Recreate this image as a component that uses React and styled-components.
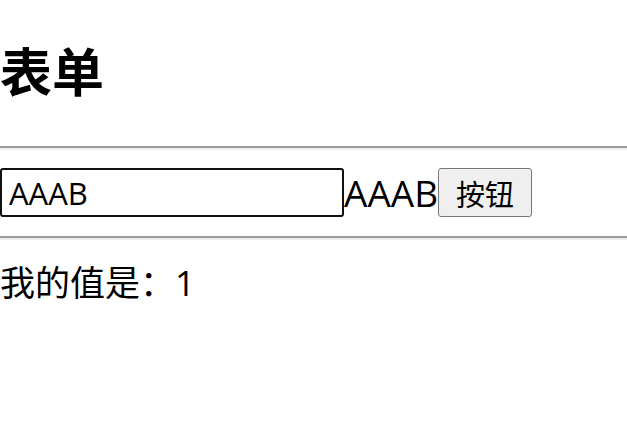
import React, { useState } from "react";
import styled, { createGlobalStyle } from "styled-components";

const GlobalStyle = createGlobalStyle`
  body {
    margin: 0;
    background: #fff;
    color: #000;
    font-family: "Open Sans", "Noto Sans CJK SC", sans-serif;
  }
`;

const Page = styled.div`
  display: flex;
  flex-direction: column;
`;

const Title = styled.h1`
  margin: 38px 0 40px;
  font-size: 52px;
  line-height: 68px;
  font-weight: 700;
`;

const Rule = styled.hr`
  margin: 0;
  height: 0;
  border: none;
  border-top: 2px solid #9a9a9a;
  border-bottom: 2px solid #eeeeee;
`;

const FormRow = styled.div`
  display: flex;
  align-items: center;
  margin: 18px 0 19px;
  height: 49px;
`;

const TextInput = styled.input`
  box-sizing: border-box;
  width: 344px;
  height: 49px;
  padding: 0 7px;
  border: 2px solid #111;
  border-radius: 3px;
  font-family: inherit;
  font-size: 31px;
  color: #000;
  outline: none;
`;

const Echo = styled.span`
  font-size: 37px;
  line-height: 49px;
`;

const Button = styled.button`
  box-sizing: border-box;
  height: 49px;
  padding: 0 17px;
  border: 1px solid #767676;
  border-radius: 3px;
  background: #efefef;
  font-family: inherit;
  font-size: 29px;
  color: #000;
  cursor: pointer;
`;

const Value = styled.div`
  margin-top: 20px;
  font-size: 35px;
  line-height: 46px;
`;

const App = () => {
  const [text, setText] = useState("AAAB");
  const [count, setCount] = useState(1);

  return (
    <>
      <GlobalStyle />
      <Page>
        <Title>表单</Title>
        <Rule />
        <FormRow>
          <TextInput value={text} onChange={(e) => setText(e.target.value)} />
          <Echo>{text}</Echo>
          <Button onClick={() => setCount(count + 1)}>按钮</Button>
        </FormRow>
        <Rule />
        <Value>我的值是：{count}</Value>
      </Page>
    </>
  );
};

export default App;
